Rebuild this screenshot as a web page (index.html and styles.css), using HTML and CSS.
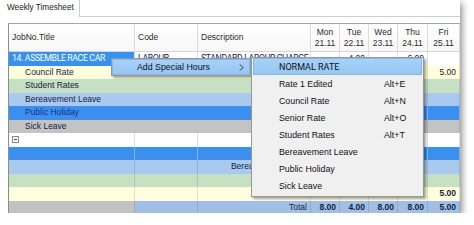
FILE: index.html
```html
<!DOCTYPE html>
<html lang="en">
<head>
    <meta charset="UTF-8">
    <title>Weekly Timesheet</title>
    <link rel="stylesheet" href="styles.css">
</head>
<body>
    <div class="window">
        <!-- Tab strip -->
        <div class="tabs">
            <div class="tab">Weekly Timesheet</div>
            <div class="tab-rest"></div>
        </div>

        <!-- Timesheet grid -->
        <div class="panel">
            <div class="grid">
                <div class="row head">
                    <div class="c">JobNo.Title</div>
                    <div class="c">Code</div>
                    <div class="c">Description</div>
                    <div class="c day">Mon<br>21.11</div>
                    <div class="c day">Tue<br>22.11</div>
                    <div class="c day">Wed<br>23.11</div>
                    <div class="c day">Thu<br>24.11</div>
                    <div class="c day">Fri<br>25.11</div>
                </div>

                <div class="row white">
                    <div class="c selected caps">14. ASSEMBLE RACE CAR</div>
                    <div class="c caps">LABOUR</div>
                    <div class="c caps">STANDARD LABOUR CHARGE</div>
                    <div class="c num"></div>
                    <div class="c num">4.00</div>
                    <div class="c num"></div>
                    <div class="c num">6.00</div>
                    <div class="c num"></div>
                </div>
                <div class="row yellow">
                    <div class="c wide child">Council Rate</div>
                    <div class="c num"></div><div class="c num"></div><div class="c num"></div><div class="c num"></div>
                    <div class="c num">5.00</div>
                </div>
                <div class="row green">
                    <div class="c wide child">Student Rates</div>
                    <div class="c num"></div><div class="c num"></div><div class="c num"></div>
                    <div class="c num">3.00</div>
                    <div class="c num"></div>
                </div>
                <div class="row lblue">
                    <div class="c wide child">Bereavement Leave</div>
                    <div class="c num"></div><div class="c num"></div><div class="c num"></div><div class="c num"></div><div class="c num"></div>
                </div>
                <div class="row blue">
                    <div class="c wide child">Public Holiday</div>
                    <div class="c num"></div><div class="c num"></div><div class="c num"></div><div class="c num"></div><div class="c num"></div>
                </div>
                <div class="row gray">
                    <div class="c wide child">Sick Leave</div>
                    <div class="c num"></div><div class="c num"></div><div class="c num"></div><div class="c num"></div><div class="c num"></div>
                </div>

                <div class="row white">
                    <div class="c">
                        <svg class="toggle" width="7" height="7" viewBox="0 0 7 7"><rect x="0.5" y="0.5" width="6" height="6" fill="#fff" stroke="#8a8a8a"/><line x1="2" y1="3.5" x2="5" y2="3.5" stroke="#444"/></svg>
                    </div>
                    <div class="c"></div><div class="c"></div>
                    <div class="c num"></div><div class="c num"></div><div class="c num"></div>
                    <div class="c num bold">8.00</div>
                    <div class="c num"></div>
                </div>
                <div class="row blue">
                    <div class="c"></div><div class="c"></div><div class="c"></div>
                    <div class="c num"></div><div class="c num"></div><div class="c num"></div><div class="c num"></div><div class="c num"></div>
                </div>
                <div class="row lblue">
                    <div class="c"></div><div class="c"></div>
                    <div class="c right">Bereavement Leave</div>
                    <div class="c num"></div><div class="c num"></div><div class="c num"></div><div class="c num"></div><div class="c num"></div>
                </div>
                <div class="row green">
                    <div class="c"></div><div class="c"></div><div class="c"></div>
                    <div class="c num"></div><div class="c num"></div><div class="c num"></div>
                    <div class="c num bold">8.00</div>
                    <div class="c num"></div>
                </div>
                <div class="row yellow">
                    <div class="c"></div><div class="c"></div><div class="c"></div>
                    <div class="c num"></div><div class="c num"></div><div class="c num"></div><div class="c num"></div>
                    <div class="c num bold">5.00</div>
                </div>
                <div class="row total">
                    <div class="c first"></div>
                    <div class="c"></div>
                    <div class="c right">Total</div>
                    <div class="c num bold">8.00</div>
                    <div class="c num bold">4.00</div>
                    <div class="c num bold">8.00</div>
                    <div class="c num bold">8.00</div>
                    <div class="c num bold">5.00</div>
                </div>
            </div>
        </div>

        <!-- Context menu -->
        <div class="menu ctx">
            <div class="item hot">
                <span>Add Special Hours</span>
                <svg width="5" height="7" viewBox="0 0 5 7"><polyline points="1,0.5 4,3.5 1,6.5" fill="none" stroke="#333" stroke-width="1"/></svg>
            </div>
        </div>

        <!-- Submenu -->
        <div class="menu sub">
            <div class="item hot"><span class="caps">NORMAL RATE</span><span></span></div>
            <div class="item"><span>Rate 1 Edited</span><span>Alt+E</span></div>
            <div class="item"><span>Council Rate</span><span>Alt+N</span></div>
            <div class="item"><span>Senior Rate</span><span>Alt+O</span></div>
            <div class="item"><span>Student Rates</span><span>Alt+T</span></div>
            <div class="item"><span>Bereavement Leave</span><span></span></div>
            <div class="item"><span>Public Holiday</span><span></span></div>
            <div class="item"><span>Sick Leave</span><span></span></div>
        </div>
    </div>
</body>
</html>
```

FILE: styles.css
```css
body {
    margin: 0;
    background-color: #ffffff;
    font-family: "Liberation Sans", Arial, sans-serif;
}
.window {
    position: relative;
    width: 460px;
    height: 213px;
    background-color: #ffffff;
    box-shadow: 2px 3px 7px rgba(0, 0, 0, 0.45);
}

/* Tabs */
.tabs {
    display: flex;
    height: 17px;
}
.tab {
    width: 80px;
    box-sizing: border-box;
    padding: 3px 0 0 7px;
    font-size: 8.2px;
    color: #1a1a1a;
    border-right: 1px solid #cdcdcd;
}
.tab-rest {
    flex: 1;
    border-bottom: 1px solid #cdcdcd;
}

/* Grid */
.panel {
    padding: 6px 0 0 8px;
}
.grid {
    border-left: 1px solid #8c8c8c;
    border-top: 1px solid #a4a4a4;
    font-size: 8.5px;
    color: #16223f;
}
.row {
    display: grid;
    grid-template-columns: 126px 63px 113px 29px 29px 29px 30px 32px;
    height: 13.5px;
}
.row .c {
    box-sizing: border-box;
    padding: 0 3px;
    line-height: 13.5px;
    white-space: nowrap;
    overflow: hidden;
    border-right: 1px solid rgba(0, 0, 0, 0.11);
}
/* capital labels are narrower in the original UI font */
.caps {
    font-family: Roboto, "Liberation Sans", sans-serif;
    font-size: 8.7px;
    letter-spacing: -0.35px;
}
.row .c.wide {
    grid-column: span 3;
}
.row .c.child {
    padding-left: 16px;
}
.row .c.num,
.row .c.right {
    text-align: right;
}
.row .c.bold {
    font-weight: bold;
}
.row.head {
    height: 27px;
    border-bottom: 1px solid #d6d6d6;
    color: #2a2a2a;
    background: linear-gradient(#ffffff, #f7f7f7);
}
.row.head .c {
    line-height: 27px;
    border-right: 1px solid #dcdcdc;
}
.row.head .c.day {
    line-height: 10.5px;
    padding-top: 3px;
    text-align: center;
}
.row.white { background-color: #ffffff; }
.row.white .c { border-right-color: #dedede; }
.row.yellow { background-color: #ffffdc; }
.row.green { background-color: #c5e0c3; }
.row.lblue { background-color: #aac9ee; }
.row.gray { background-color: #c3c3c3; }
.row.blue {
    background-color: #3a8ff0;
    color: #1c2f80;
}
.row.blue .c { border-right-color: rgba(255, 255, 255, 0.35); }
.row.total { background-color: #a0bfe8; }
.row.total .c.first { background-color: #c2c2c2; }
.row .c.selected {
    background-color: #3592f4;
    color: #ffffff;
}
.toggle {
    display: block;
    margin: 3px 0 0 0;
}

/* Menus */
.menu {
    position: absolute;
    box-sizing: border-box;
    background-color: #f0f0f0;
    border: 1px solid #979797;
    box-shadow: 2px 2px 2px rgba(0, 0, 0, 0.35);
    font-size: 8.8px;
    color: #111;
}
.menu .item {
    box-sizing: border-box;
    border: 1px solid transparent;
}
.menu .item.hot {
    background: linear-gradient(#a7d1f8, #95c6f3);
    border-color: #86b8e9;
}
.ctx {
    left: 111px;
    top: 58px;
    width: 140px;
}
.ctx .item {
    display: flex;
    align-items: center;
    justify-content: space-between;
    height: 16px;
    padding: 0 5px 0 24px;
}
.sub {
    left: 251px;
    top: 57px;
    width: 173px;
    padding: 0 1px 2px 1px;
}
.sub .item {
    display: grid;
    grid-template-columns: 1fr 37px;
    align-items: center;
    height: 17px;
    padding-left: 25px;
}
.sub .item .caps {
    font-size: 9px;
    letter-spacing: 0;
}
```
